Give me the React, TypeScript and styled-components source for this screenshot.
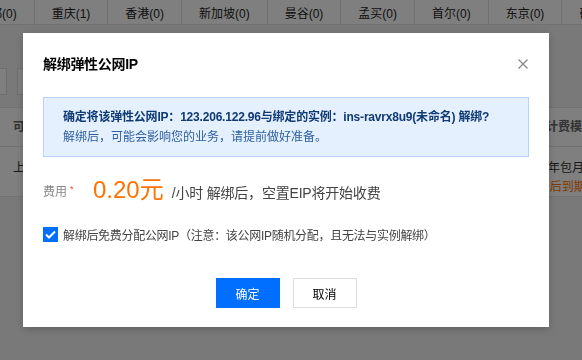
import React from "react";
import styled, { createGlobalStyle } from "styled-components";

const Global = createGlobalStyle`
  html, body { margin: 0; padding: 0; }
  body {
    width: 582px; height: 360px; overflow: hidden;
    font-family: "Liberation Sans", "Noto Sans CJK SC", sans-serif;
    font-size: 12px; color: #333; background: #f2f2f2;
  }
`;

const Page = styled.div`
  width: 582px; height: 360px; overflow: hidden;
  display: flex; flex-direction: column; background: #f2f2f2;
`;

const TabViewport = styled.div`
  height: 24px; overflow: hidden; background: #fff;
  border-bottom: 1px solid #e2e2e2; flex: none;
`;

const TabStrip = styled.div`
  display: flex; height: 100%; transform: translateX(-39px);
`;

const Tab = styled.div`
  flex: none; padding: 0 17px; display: flex; align-items: center;
  border-right: 1px solid #e2e2e2; color: #222; font-size: 12px;
  white-space: nowrap;
`;

const Toolbar = styled.div`
  display: flex; gap: 10px; margin-top: 43px; height: 27px;
  margin-left: -40px;
`;

const ToolBox = styled.div<{ $w: number }>`
  width: ${(p) => p.$w}px; height: 27px; background: #fff; border: 1px solid #ddd;
  box-sizing: border-box;
`;

const Table = styled.div`
  margin-top: 12px; background: #fff; display: flex; flex-direction: column;
  overflow: hidden;
`;

const Row = styled.div<{ $head?: boolean }>`
  display: grid; grid-template-columns: 523px 80px;
  align-items: ${(p) => (p.$head ? "center" : "start")};
  height: ${(p) => (p.$head ? 40 : 50)}px; border-bottom: 1px solid #e5e5e5;
  border-top: ${(p) => (p.$head ? "1px solid #e5e5e5" : "none")};
  padding: ${(p) => (p.$head ? "0" : "12px")} 0 0 13px; box-sizing: border-box;
  font-weight: ${(p) => (p.$head ? "bold" : "normal")};
  color: ${(p) => (p.$head ? "#666" : "#333")};
`;

const Cell = styled.div<{ $indent?: number }>`
  display: flex; flex-direction: column; line-height: 19px; white-space: nowrap;
  padding-left: ${(p) => p.$indent ?? 0}px;
`;

const Orange = styled.span`
  color: #ff7200; margin-left: -5px;
`;

const Overlay = styled.div`
  position: fixed; inset: 0; background: rgba(0, 0, 0, 0.5);
  display: flex; align-items: center; padding-left: 23px;
`;

const Dialog = styled.div`
  width: 526px; height: 294px; background: #fff; box-sizing: border-box;
  padding: 21px 20px 19px; display: flex; flex-direction: column;
  box-shadow: 0 2px 8px rgba(0,0,0,0.2);
`;

const Header = styled.div`
  display: flex; justify-content: space-between; align-items: center; height: 20px;
`;

const Title = styled.div`
  font-size: 14px; font-weight: bold; color: #000; line-height: 20px;
  letter-spacing: -0.3px;
`;

const Close = styled.button`
  border: none; background: none; padding: 0; width: 10px; height: 10px;
  display: flex; cursor: pointer; margin-right: 1px;
`;

const Info = styled.div`
  margin-top: 23px; background: #e5f0ff; border: 1px solid #b7d4f7;
  padding: 9px 19px; line-height: 20px; font-size: 12px;
`;

const InfoStrong = styled.div`
  font-weight: bold; color: #0f3a73; letter-spacing: -0.2px;
`;

const InfoText = styled.div`
  color: #2c5e9e;
`;

const FeeRow = styled.div`
  margin-top: 17px; height: 32px; display: flex; align-items: center;
`;

const FeeLabel = styled.div`
  width: 50px; flex: none; color: #888; font-size: 12px; display: flex; align-items: center;
`;

const Star = styled.span`
  color: #e54545; font-size: 9px; margin-left: 3px; position: relative; top: -1px;
`;

const Price = styled.span`
  color: #ff7200; font-size: 24px; line-height: 32px;
`;

const Unit = styled.span`
  color: #444; font-size: 14px; margin-left: 8px; margin-top: 4px;
  letter-spacing: -0.2px;
`;

const CheckRow = styled.label`
  margin-top: 18px; height: 20px; display: flex; align-items: center; gap: 5px;
  color: #444; font-size: 12px; letter-spacing: -0.3px;
`;

const Box = styled.span`
  width: 15px; height: 15px; background: #006eff; display: flex;
  align-items: center; justify-content: center; flex: none;
`;

const Actions = styled.div`
  margin-top: 34px; display: flex; justify-content: center; gap: 13px;
`;

const Btn = styled.button<{ $primary?: boolean }>`
  width: 64px; height: 30px; font-family: inherit; font-size: 12px;
  border: 1px solid ${(p) => (p.$primary ? "#006eff" : "#ddd")};
  background: ${(p) => (p.$primary ? "#006eff" : "#fff")};
  color: ${(p) => (p.$primary ? "#fff" : "#000")};
  padding: 0; cursor: pointer;
`;

const tabs = ["成都(0)", "重庆(1)", "香港(0)", "新加坡(0)", "曼谷(0)", "孟买(0)", "首尔(0)", "东京(0)", "硅谷(0)"];

export default function App() {
  return (
    <>
      <Global />
      <Page>
        <TabViewport>
          <TabStrip>
            {tabs.map((t) => (
              <Tab key={t}>{t}</Tab>
            ))}
          </TabStrip>
        </TabViewport>
        <Toolbar>
          <ToolBox $w={47} />
          <ToolBox $w={120} />
        </Toolbar>
        <Table>
          <Row $head>
            <Cell>可用区</Cell>
            <Cell $indent={10}>计费模式</Cell>
          </Row>
          <Row>
            <Cell>上海三区</Cell>
            <Cell>
              <span>包年包月</span>
              <Orange>7天后到期</Orange>
            </Cell>
          </Row>
        </Table>
      </Page>
      <Overlay>
        <Dialog>
          <Header>
            <Title>解绑弹性公网IP</Title>
            <Close aria-label="关闭">
              <svg width="10" height="10" viewBox="0 0 10 10">
                <path d="M0.5 0.5 L9.5 9.5 M9.5 0.5 L0.5 9.5" stroke="#888" strokeWidth="1.3" />
              </svg>
            </Close>
          </Header>
          <Info>
            <InfoStrong>确定将该弹性公网IP：123.206.122.96与绑定的实例：ins-ravrx8u9(未命名) 解绑?</InfoStrong>
            <InfoText>解绑后，可能会影响您的业务，请提前做好准备。</InfoText>
          </Info>
          <FeeRow>
            <FeeLabel>
              费用<Star>*</Star>
            </FeeLabel>
            <Price>0.20元</Price>
            <Unit>/小时 解绑后，空置EIP将开始收费</Unit>
          </FeeRow>
          <CheckRow>
            <Box>
              <svg width="11" height="9" viewBox="0 0 11 9">
                <path d="M1 4.5 L4 7.5 L10 1.5" stroke="#fff" strokeWidth="2" fill="none" />
              </svg>
            </Box>
            解绑后免费分配公网IP（注意：该公网IP随机分配，且无法与实例解绑）
          </CheckRow>
          <Actions>
            <Btn $primary>确定</Btn>
            <Btn>取消</Btn>
          </Actions>
        </Dialog>
      </Overlay>
    </>
  );
}
